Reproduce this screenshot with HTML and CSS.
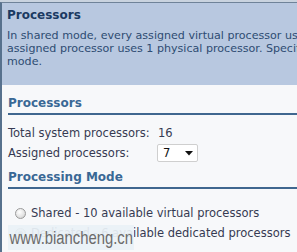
FILE: index.html
```html
<!DOCTYPE html>
<html lang="en">
<head>
    <meta charset="UTF-8">
    <meta name="viewport" content="width=device-width, initial-scale=1.0">
    <title>Processors</title>
    <link rel="stylesheet" href="styles.css">
</head>
<body>

    <div class="panel">
        <div class="intro">
            <h1>Processors</h1>
            <p>In shared mode, every assigned virtual processor uses 0.1 processing units. In dedicated mode, every<br>assigned processor uses 1 physical processor. Specify the number of processors and the processing<br>mode.</p>
        </div>

        <div class="section">
            <h2>Processors</h2>
            <div class="fields">
                <span>Total system processors:</span>
                <span>16</span>
                <span>Assigned processors:</span>
                <div class="select">
                    <span>7</span>
                    <svg width="8" height="5" viewBox="0 0 8 5"><path d="M0 0H8L4 4.5Z" fill="#111"/></svg>
                </div>
            </div>
        </div>

        <div class="section mode">
            <h2>Processing Mode</h2>
            <label class="option">
                <span class="radio"></span>
                Shared - 10 available virtual processors
            </label>
            <label class="option">
                <span class="radio checked"></span>
                Dedicated - 6 available dedicated processors
            </label>
        </div>

        <div class="watermark"><span>www.biancheng.cn</span></div>
    </div>

</body>
</html>
```

FILE: styles.css
```css
    body {
        font-family: 'DejaVu Sans', Verdana, sans-serif;
        font-size: 11.5px;
        background-color: #c9d3df;
        color: #363a52;
        margin: 0;
        padding: 0;
        padding-top: 2px;
        overflow: hidden;
    }
    .panel {
        position: relative;
        height: 250px;
        background-color: #f7f8fa;
        border-left: 2px solid #57718d;
        border-top: 1px solid #6f8399;
    }
    .intro {
        background-color: #b8c8e0;
        padding: 5px 0 17px 5px;
        white-space: nowrap;
        overflow: hidden;
    }
    .intro h1 {
        margin: 0;
        font-size: 12px;
        line-height: 14px;
        color: #1b3a62;
    }
    .intro p {
        margin: 7px 0 0 0;
        font-size: 11.1px;
        line-height: 13px;
        color: #2e4c72;
    }
    .section {
        padding: 11px 0 0 6px;
    }
    .section.mode {
        padding-top: 8px;
    }
    .section h2 {
        margin: 0;
        font-size: 12px;
        line-height: 14px;
        color: #3a6895;
        padding-bottom: 3px;
        border-bottom: 2px solid #40678f;
    }
    .fields {
        display: grid;
        grid-template-columns: 147px max-content;
        column-gap: 3px;
        row-gap: 4px;
        align-items: center;
        margin-top: 11px;
        line-height: 14px;
    }
    .select {
        display: flex;
        align-items: center;
        justify-content: space-between;
        box-sizing: border-box;
        width: 41px;
        height: 18px;
        padding: 0 4px 0 5px;
        margin-left: -1px;
        background-color: #ffffff;
        border: 1px solid #cfcfcf;
        border-radius: 2px;
        color: #111;
    }
    .option {
        display: flex;
        align-items: center;
        gap: 5px;
        line-height: 14px;
        margin-top: 6px;
        padding-left: 7px;
    }
    .section h2 + .option {
        margin-top: 17px;
    }
    .radio {
        width: 11px;
        height: 11px;
        box-sizing: border-box;
        border-radius: 50%;
        border: 1px solid #9a9a9a;
        background: radial-gradient(circle at 40% 35%, #ffffff 0%, #e2e2e2 60%, #c4c4c4 100%);
    }
    .radio.checked {
        background: radial-gradient(circle at 50% 50%, #6a7f8e 0%, #8ea2ae 35%, #dfe4e8 45%, #c8cdd2 100%);
    }
    .watermark {
        position: absolute;
        left: 6px;
        top: 222px;
        width: 126px;
        height: 25px;
        background-color: rgba(234, 241, 246, 0.93);
        display: flex;
        align-items: center;
        justify-content: center;
    }
    .watermark span {
        font-family: 'Liberation Sans', Arial, sans-serif;
        font-size: 19px;
        color: #6b6b6b;
        display: inline-block;
        transform: scaleX(0.78);
        white-space: nowrap;
    }
```
